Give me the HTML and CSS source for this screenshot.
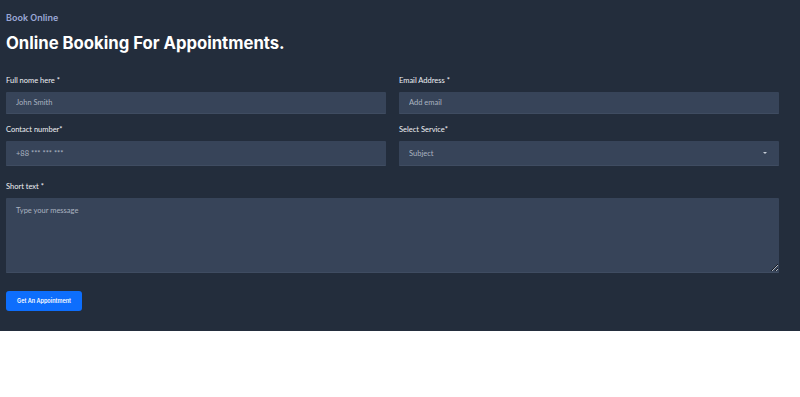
FILE: index.html
```html
<!DOCTYPE html>
<html lang="en">
<head>
    <meta charset="UTF-8">
    <meta name="viewport" content="width=device-width, initial-scale=1.0">
    <title>Book Online</title>
    <link rel="stylesheet" href="styles.css">
</head>
<body>
    <section class="booking">
        <p class="eyebrow">Book Online</p>
        <h1>Online Booking For Appointments.</h1>

        <form class="booking-form">
            <div class="field">
                <label for="fullName">Full nome here *</label>
                <input type="text" id="fullName" placeholder="John Smith">
            </div>
            <div class="field">
                <label for="email">Email Address *</label>
                <input type="email" id="email" placeholder="Add email">
            </div>
            <div class="field tall">
                <label for="phone">Contact number*</label>
                <input type="text" id="phone" placeholder="+88 *** *** ***">
            </div>
            <div class="field tall">
                <label for="service">Select Service*</label>
                <div class="select-wrap">
                    <select id="service">
                        <option>Subject</option>
                    </select>
                </div>
            </div>
            <div class="field full message">
                <label for="message">Short text *</label>
                <textarea id="message" placeholder="Type your message"></textarea>
            </div>
            <div class="field full actions">
                <button type="button">Get An Appointment</button>
            </div>
        </form>
    </section>
</body>
</html>
```

FILE: styles.css
```css
/* Base */
body {
    margin: 0;
    padding: 0;
    background-color: #fff;
    font-family: 'Lato', 'Open Sans', sans-serif;
}

/* Sezione prenotazione */
.booking {
    background-color: #232d3c;
    height: 331px;
    box-sizing: border-box;
    padding: 12px 21px 0 6px;
    color: #fff;
}

.eyebrow {
    margin: 0;
    font-family: 'Inter', sans-serif;
    font-size: 9px;
    font-weight: 600;
    color: #9aa7d6;
    line-height: 12px;
}

h1 {
    margin: 8px 0 0;
    font-family: 'Inter', sans-serif;
    font-size: 16.7px;
    font-weight: 700;
    line-height: 22px;
}

/* Form */
.booking-form {
    display: grid;
    grid-template-columns: 1fr 1fr;
    column-gap: 13px;
    row-gap: 11px;
    margin-top: 22px;
}

.field {
    display: flex;
    flex-direction: column;
}

.field.full {
    grid-column: 1 / -1;
}

.field.message {
    margin-top: 5px;
}

.field.actions {
    margin-top: 7px;
}

label {
    font-size: 7.5px;
    line-height: 10px;
    margin-bottom: 6px;
    color: #eef0f4;
}

input, select, textarea {
    display: block;
    font-family: 'Lato', 'Open Sans', sans-serif;
    font-size: 7.5px;
    color: #c5ccd6;
    background-color: #374459;
    border: none;
    border-bottom: 1px solid #3f4c61;
    border-radius: 1px;
    padding: 0 10px;
    height: 22px;
    box-sizing: border-box;
    outline: none;
    width: 100%;
}

input::placeholder, textarea::placeholder {
    color: #aab3c0;
}

.field.tall input,
.field.tall select {
    height: 25px;
}

.select-wrap {
    position: relative;
}

select {
    appearance: none;
    color: #aab3c0;
}

.select-wrap::after {
    content: '';
    position: absolute;
    right: 12px;
    top: 11px;
    border-left: 2px solid transparent;
    border-right: 2px solid transparent;
    border-top: 2px solid #c5ccd6;
}

textarea {
    height: 75px;
    padding: 8px 10px;
    resize: vertical;
}

button {
    align-self: flex-start;
    background-color: #0d6efd;
    color: #fff;
    border: none;
    border-radius: 3px;
    width: 76px;
    height: 20px;
    font-family: 'Inter', sans-serif;
    font-size: 5.5px;
    font-weight: 600;
    cursor: pointer;
}
```
